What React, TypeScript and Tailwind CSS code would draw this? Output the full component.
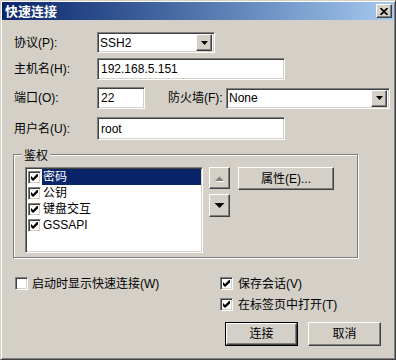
import React from 'react';

const sunken =
  'border border-t-[#808080] border-l-[#808080] border-r-white border-b-white shadow-[inset_1px_1px_0_#404040,inset_-1px_-1px_0_#d4d0c8] bg-white';
const raised =
  'border border-t-white border-l-white border-r-[#404040] border-b-[#404040] shadow-[inset_-1px_-1px_0_#808080] bg-[#d4d0c8]';

function Check() {
  return (
    <svg width="7" height="7" viewBox="0 0 7 7">
      <path d="M0 2 L2 4 L6 0 L7 0 L7 2.5 L2 7 L0 5 Z" fill="#000" />
    </svg>
  );
}

function CheckBox({ checked }: { checked: boolean }) {
  return (
    <span className={`${sunken} w-[13px] h-[13px] shrink-0 flex items-center justify-center`}>
      {checked && <Check />}
    </span>
  );
}

function DropArrow() {
  return (
    <span className={`${raised} w-[16px] h-[17px] shrink-0 flex items-center justify-center`}>
      <svg width="7" height="4" viewBox="0 0 7 4">
        <path d="M0 0 H7 L3.5 4 Z" fill="#000" />
      </svg>
    </span>
  );
}

function Select({ value, className }: { value: string; className: string }) {
  return (
    <div className={`${sunken} ${className} flex items-center pl-[2px] pr-[2px]`}>
      <span className="flex-1 leading-none">{value}</span>
      <DropArrow />
    </div>
  );
}

function TextBox({ value, className }: { value: string; className: string }) {
  return (
    <div className={`${sunken} ${className} flex items-center pl-[3px] leading-none`}>{value}</div>
  );
}

function Row({ children, className }: { children: React.ReactNode; className: string }) {
  return <div className={`flex items-center ${className}`}>{children}</div>;
}

const methods = ['密码', '公钥', '键盘交互', 'GSSAPI'];

export default function App() {
  return (
    <div className="w-[396px] h-[360px] bg-[#d4d0c8] border border-t-[#d4d0c8] border-l-[#d4d0c8] border-r-[#404040] border-b-[#404040] shadow-[inset_1px_1px_0_white,inset_-1px_-1px_0_#808080] p-[1px] font-['Liberation_Sans','Noto_Sans_CJK_SC',sans-serif] text-[12px] text-black flex flex-col">
      {/* title bar */}
      <div className="h-[18px] bg-linear-to-r from-[#0a246a] to-[#a6caf0] flex items-center pl-[3px] pr-[2px]">
        <span className="flex-1 text-white font-bold text-[13px] leading-none">快速连接</span>
        <span className={`${raised} w-[16px] h-[14px] flex items-center justify-center`}>
          <svg width="8" height="7" viewBox="0 0 8 7">
            <path d="M0.5 0 L7.5 7 M7.5 0 L0.5 7" stroke="#000" strokeWidth="1.6" />
          </svg>
        </span>
      </div>

      <div className="flex flex-col pl-[12px]">
        <Row className="mt-[12px]">
          <span className="w-[83px]">协议(P):</span>
          <Select value="SSH2" className="w-[118px] h-[21px]" />
        </Row>
        <Row className="mt-[5px]">
          <span className="w-[83px]">主机名(H):</span>
          <TextBox value="192.168.5.151" className="w-[188px] h-[22px]" />
        </Row>
        <Row className="mt-[7px]">
          <span className="w-[83px]">端口(O):</span>
          <TextBox value="22" className="w-[48px] h-[22px]" />
          <span className="ml-[23px] w-[58px]">防火墙(F):</span>
          <Select value="None" className="w-[164px] h-[21px]" />
        </Row>
        <Row className="mt-[8px]">
          <span className="w-[83px]">用户名(U):</span>
          <TextBox value="root" className="w-[188px] h-[23px]" />
        </Row>

        {/* 鉴权 group */}
        <div className="relative mt-[14px] -ml-[1px] w-[345px] h-[104px] border border-[#808080] shadow-[inset_1px_1px_0_white,1px_1px_0_white] pl-[11px] pt-[12px] flex gap-[6px]">
          <span className="absolute -top-[6px] left-[8px] px-[2px] bg-[#d4d0c8] leading-[14px]">鉴权</span>
          <div className={`${sunken} w-[178px] h-[86px] p-[1px] flex flex-col`}>
            {methods.map((m, i) => (
              <div key={m} className="h-[16px] flex items-center">
                <span className="pl-[1px] pr-[1px]">
                  <CheckBox checked />
                </span>
                <span
                  className={`flex-1 h-full flex items-center pl-[1px] leading-none ${
                    i === 0 ? 'bg-[#0a246a] text-white' : ''
                  }`}
                >
                  {m}
                </span>
              </div>
            ))}
          </div>
          <div className="flex flex-col gap-[5px]">
            <span className={`${raised} w-[21px] h-[22px] flex items-center justify-center`}>
              <svg width="11" height="7" viewBox="0 0 11 7">
                <path d="M1 6 H10 L5.5 1.5 Z" fill="#fff" transform="translate(1 1)" />
                <path d="M1 6 H10 L5.5 1.5 Z" fill="#808080" />
              </svg>
            </span>
            <span className={`${raised} w-[21px] h-[23px] flex items-center justify-center`}>
              <svg width="11" height="7" viewBox="0 0 11 7">
                <path d="M0.5 1 H10.5 L5.5 6 Z" fill="#000" />
              </svg>
            </span>
          </div>
          <span className={`${raised} ml-[2px] w-[96px] h-[23px] flex items-center justify-center leading-none`}>
            属性(E)...
          </span>
        </div>

        {/* bottom options */}
        <div className="flex mt-[19px]">
          <div className="w-[206px]">
            <label className="flex items-center gap-[4px] h-[13px] ml-[1px]">
              <CheckBox checked={false} />
              <span className="leading-none">启动时显示快速连接(W)</span>
            </label>
          </div>
          <div className="flex flex-col gap-[8px]">
            <label className="flex items-center gap-[5px] h-[13px]">
              <CheckBox checked />
              <span className="leading-none">保存会话(V)</span>
            </label>
            <label className="flex items-center gap-[5px] h-[13px]">
              <CheckBox checked />
              <span className="leading-none">在标签页中打开(T)</span>
            </label>
          </div>
        </div>

        <div className="flex gap-[10px] mt-[11px] ml-[211px]">
          <span className="w-[73px] h-[24px] border border-black">
            <span className={`${raised} w-full h-full flex items-center justify-center leading-none`}>连接</span>
          </span>
          <span className={`${raised} w-[73px] h-[24px] flex items-center justify-center leading-none`}>取消</span>
        </div>
      </div>
    </div>
  );
}
